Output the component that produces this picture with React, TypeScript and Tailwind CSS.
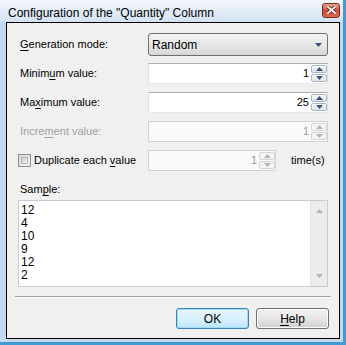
import React from "react"

const font = "font-['Liberation_Sans',Arial,sans-serif]"

function Arrow({ up, disabled }: { up?: boolean; disabled?: boolean }) {
  const fill = disabled ? "#b4b4b4" : "#3c4f86"
  return (
    <svg width="7" height="4" viewBox="0 0 7 4">
      {up ? <path d="M3.5 0 L7 4 L0 4 Z" fill={fill} /> : <path d="M0 0 L7 0 L3.5 4 Z" fill={fill} />}
    </svg>
  )
}

function Spin({ value, disabled }: { value: string; disabled?: boolean }) {
  return (
    <div
      className={`flex h-[21px] w-full border ${
        disabled ? "border-[#cfd3d8] bg-[#fafafa]" : "border-[#abadb3] border-b-[#e3e9ef] border-x-[#dbdfe6] bg-white"
      }`}
    >
      <div
        className={`flex-1 text-right pr-[2px] text-[11px] leading-[19px] ${
          disabled ? "text-[#9a9a9a]" : "text-black"
        }`}
      >
        {value}
      </div>
      <div className="flex w-[16px] flex-col gap-px py-px">
        {[true, false].map((up) => (
          <div
            key={String(up)}
            className={`flex flex-1 items-center justify-center rounded-[2px] border ${
              disabled
                ? "border-[#d5d5d5] bg-[#f4f4f4]"
                : "border-[#a9b4c4] bg-gradient-to-b from-[#fbfbfb] to-[#dfe3e8]"
            }`}
          >
            <Arrow up={up} disabled={disabled} />
          </div>
        ))}
      </div>
    </div>
  )
}

function Label({ pre, u, post, disabled }: { pre: string; u: string; post: string; disabled?: boolean }) {
  return (
    <span className={disabled ? "text-[#a0a0a0]" : "text-black"}>
      {pre}
      <span className="underline underline-offset-[2px]">{u}</span>
      {post}
    </span>
  )
}

export default function App() {
  const sample = ["12", "4", "10", "9", "12", "2"]
  return (
    <div className={`${font} relative h-[345px] w-[346px] bg-[#c4d9ef]`}>
      <div className="absolute right-0 top-0 h-full w-[3px] bg-[#3f9ad6]" />
      <div className="absolute bottom-0 left-0 h-[3px] w-full bg-[#3f9ad6]" />

      <div className="flex h-[22px] items-center bg-gradient-to-b from-[#f3f7fc] to-[#d3e2f3] pl-[8px] pr-[6px]">
        <span className="flex-1 pt-[3px] text-[12px] text-black">
          Configuration of the "Quantity" Column
        </span>
        <div className="mt-[-2px] flex h-[15px] w-[18px] items-center justify-center rounded-[3px] border border-[#7c2b1e] bg-gradient-to-b from-[#e7a591] via-[#cc4d36] to-[#d76a50]">
          <svg width="9" height="8" viewBox="0 0 9 8">
            <path d="M1 1 L8 7 M8 1 L1 7" stroke="#5a1a10" strokeWidth="3.2" strokeLinecap="square" />
            <path d="M1 1 L8 7 M8 1 L1 7" stroke="#ffffff" strokeWidth="1.8" strokeLinecap="square" />
          </svg>
        </div>
      </div>

      <div className="ml-[6px] flex h-[317px] w-[334px] flex-col border border-black bg-[#f0f0f0] text-[11px]">
        <div className="flex flex-col px-[11px] pt-[10px]">
          <div className="flex h-[23px] items-center">
            <div className="w-[130px] pl-[2px]">
              <Label pre="" u="G" post="eneration mode:" />
            </div>
            <div className="flex h-[23px] flex-1 items-center rounded-[3px] border border-[#707070] bg-gradient-to-b from-[#f3f3f3] via-[#e8e8e8] to-[#d6d6d6] pl-[3px] pr-[5px]">
              <span className="flex-1 text-[12px]">Random</span>
              <Arrow />
            </div>
          </div>

          <div className="mt-[7px] flex flex-col gap-[8px]">
            <div className="flex h-[21px] items-center">
              <div className="w-[130px] pl-[2px]">
                <Label pre="Minim" u="u" post="m value:" />
              </div>
              <div className="flex-1">
                <Spin value="1" />
              </div>
            </div>
            <div className="flex h-[21px] items-center">
              <div className="w-[130px] pl-[2px]">
                <Label pre="Ma" u="x" post="imum value:" />
              </div>
              <div className="flex-1">
                <Spin value="25" />
              </div>
            </div>
            <div className="flex h-[21px] items-center">
              <div className="w-[130px] pl-[2px]">
                <Label pre="Incre" u="m" post="ent value:" disabled />
              </div>
              <div className="flex-1">
                <Spin value="1" disabled />
              </div>
            </div>
            <div className="flex h-[21px] items-center">
              <div className="flex w-[130px] items-center gap-[3px]">
                <div className="h-[13px] w-[13px] border border-[#8f8f8f] bg-gradient-to-br from-[#d6d6d6] to-[#f7f7f7] p-[2px]">
                  <div className="h-full w-full border border-[#b8b8b8] bg-gradient-to-br from-[#cfcfcf] to-[#f2f2f2]" />
                </div>
                <Label pre="Duplicate each " u="v" post="alue" />
              </div>
              <div className="w-[128px]">
                <Spin value="1" disabled />
              </div>
              <span className="ml-[15px]">time(s)</span>
            </div>
          </div>

          <div className="mt-[12px] h-[13px] pl-[2px] leading-[13px]">
            <Label pre="Sam" u="p" post="le:" />
          </div>

          <div className="mt-[4px] flex h-[87px] border border-[#c5ccd6] bg-white">
            <div className="flex-1 pl-[2px] pt-[3px] text-[12px] leading-[13px]">
              {sample.map((s, i) => (
                <div key={i}>{s}</div>
              ))}
            </div>
            <div className="flex w-[17px] flex-col items-center justify-between border-l border-[#e2e2e2] bg-[#ececec] py-[8px]">
              <Arrow up disabled />
              <Arrow disabled />
            </div>
          </div>
        </div>

        <div className="mx-[8px] mt-[9px] border-b border-t border-b-white border-t-[#a0a0a0]" />

        <div className="mt-[10px] flex justify-end gap-[7px] pr-[10px]">
          <div className="flex h-[21px] w-[73px] items-center justify-center rounded-[3px] border border-[#3c7fb1] bg-gradient-to-b from-[#eaf6fd] via-[#d9f0fc] to-[#bee6fd] text-[12px] shadow-[inset_0_0_0_1px_#9fdcf5]">
            OK
          </div>
          <div className="flex h-[21px] w-[73px] items-center justify-center rounded-[3px] border border-[#707070] bg-gradient-to-b from-[#f2f2f2] via-[#e6e6e6] to-[#d0d0d0] text-[12px] shadow-[inset_0_0_0_1px_#fbfbfb]">
            <Label pre="" u="H" post="elp" />
          </div>
        </div>
      </div>
    </div>
  )
}
